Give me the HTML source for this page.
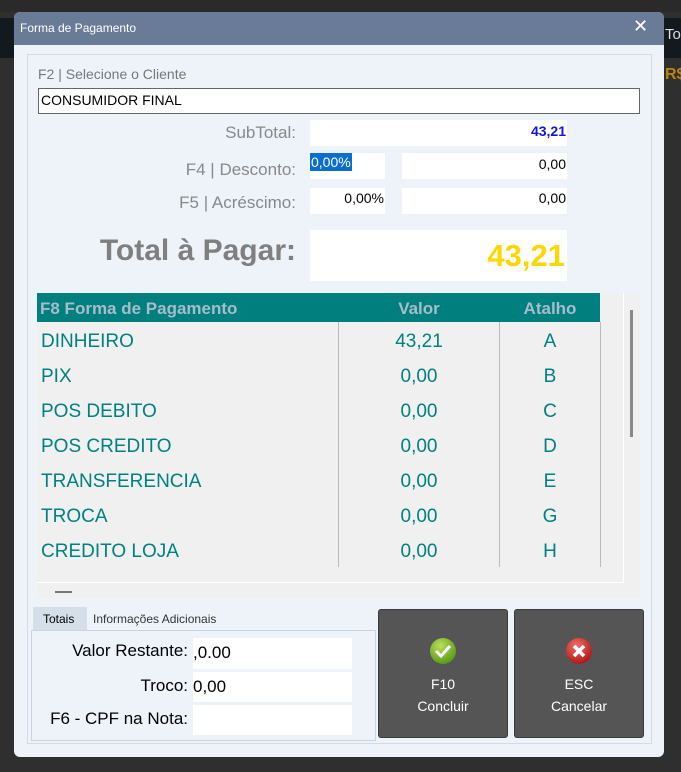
<!DOCTYPE html>
<html><head><meta charset="utf-8"><style>
*{margin:0;padding:0;box-sizing:border-box}
body{width:681px;height:772px;background:#2f2f2f;position:relative;overflow:hidden;font-family:"Liberation Sans",sans-serif}
.a{position:absolute}
.t{white-space:nowrap}
.row{position:absolute;left:37px;width:563px;height:35px;font-size:19px;color:#008080}
.row span{position:absolute;top:8px}
.inp{position:absolute;background:#fff}
</style></head><body>
<div class="a" style="left:0;top:0;width:681px;height:12px;background:#2a2a2a"></div>
<div class="a" style="left:0;top:18px;width:681px;height:40px;background:#121a20"></div>
<div class="a t" style="left:665px;top:26px;font-size:15px;color:#ddd">To</div>
<div class="a t" style="left:665px;top:66px;font-size:16px;color:#b8860b;font-weight:bold">R$</div>
<div class="a" style="left:14px;top:12px;width:650px;height:745px;background:#eef3fa;border-radius:6px;overflow:hidden">
 <div class="a" style="left:0;top:0;width:650px;height:33px;background:#6a7b98"></div>
 <div class="a t" style="left:6px;top:9px;font-size:12px;color:#fff">Forma de Pagamento</div>
 <div class="a t" style="left:619px;top:4px;font-size:18px;color:#fff">✕</div>
 <div class="a" style="left:13px;top:42px;width:625px;height:690px;border:1px solid #d0dbe6"></div>
</div>
<div class="a t" style="left:38px;top:66px;font-size:14px;color:#777">F2 | Selecione o Cliente</div>
<div class="a" style="left:38px;top:88px;width:602px;height:26px;background:#fff;border:1px solid #666"></div>
<div class="a t" style="left:41px;top:92px;font-size:14px;color:#000">CONSUMIDOR FINAL</div>
<div class="a t" style="left:150px;top:123px;width:146px;text-align:right;font-size:17px;color:#888">SubTotal:</div>
<div class="inp" style="left:310px;top:120px;width:257px;height:26px"></div>
<div class="a t" style="left:500px;top:123px;width:66px;text-align:right;font-size:14px;color:#1010e0;font-weight:bold">43,21</div>
<div class="a t" style="left:150px;top:160px;width:146px;text-align:right;font-size:17px;color:#888">F4 | Desconto:</div>
<div class="inp" style="left:310px;top:153px;width:75px;height:26px"></div>
<div class="a t" style="left:310px;top:153px;background:#0a6ed1;color:#fff;font-size:14px;padding:1px 1px">0,00%</div>
<div class="inp" style="left:402px;top:153px;width:165px;height:26px"></div>
<div class="a t" style="left:500px;top:156px;width:66px;text-align:right;font-size:14px">0,00</div>
<div class="a t" style="left:150px;top:193px;width:146px;text-align:right;font-size:17px;color:#888">F5 | Acréscimo:</div>
<div class="inp" style="left:310px;top:188px;width:75px;height:26px"></div>
<div class="a t" style="left:310px;top:190px;width:74px;text-align:right;font-size:14px">0,00%</div>
<div class="inp" style="left:402px;top:188px;width:165px;height:26px"></div>
<div class="a t" style="left:500px;top:190px;width:66px;text-align:right;font-size:14px">0,00</div>
<div class="a t" style="left:60px;top:234px;width:236px;text-align:right;font-size:30px;font-weight:bold;color:#7f7f7f">Total à Pagar:</div>
<div class="inp" style="left:310px;top:230px;width:257px;height:51px"></div>
<div class="a t" style="left:400px;top:238px;width:165px;text-align:right;font-size:31px;font-weight:bold;color:#ffd700">43,21</div>
<div class="a" style="left:37px;top:293px;width:603px;height:305px;background:#f0f0f0"></div>
<div class="a" style="left:37px;top:582px;width:586px;height:1px;background:#fff"></div>
<div class="a" style="left:623px;top:293px;width:1px;height:290px;background:#fff"></div>
<div class="a" style="left:630px;top:310px;width:3px;height:127px;background:#888"></div>
<div class="a" style="left:55px;top:591px;width:17px;height:2px;background:#777"></div>
<div class="a" style="left:37px;top:293px;width:563px;height:29px;background:#007f7f"></div>
<div class="a t" style="left:40px;top:299px;font-size:17px;font-weight:bold;color:#a8bccb">F8 Forma de Pagamento</div>
<div class="a t" style="left:338px;top:299px;width:162px;text-align:center;font-size:17px;font-weight:bold;color:#a8bccb">Valor</div>
<div class="a t" style="left:500px;top:299px;width:100px;text-align:center;font-size:17px;font-weight:bold;color:#a8bccb">Atalho</div>
<div class="a" style="left:338px;top:322px;width:1px;height:245px;background:#bbb"></div>
<div class="a" style="left:499px;top:322px;width:1px;height:245px;background:#bbb"></div>
<div class="a" style="left:600px;top:322px;width:1px;height:245px;background:#bbb"></div>
<div class="row" style="top:323px"><span style="left:4px">DINHEIRO</span><span style="left:301px;width:162px;text-align:center">43,21</span><span style="left:463px;width:100px;text-align:center">A</span></div>
<div class="row" style="top:358px"><span style="left:4px">PIX</span><span style="left:301px;width:162px;text-align:center">0,00</span><span style="left:463px;width:100px;text-align:center">B</span></div>
<div class="row" style="top:393px"><span style="left:4px">POS DEBITO</span><span style="left:301px;width:162px;text-align:center">0,00</span><span style="left:463px;width:100px;text-align:center">C</span></div>
<div class="row" style="top:428px"><span style="left:4px">POS CREDITO</span><span style="left:301px;width:162px;text-align:center">0,00</span><span style="left:463px;width:100px;text-align:center">D</span></div>
<div class="row" style="top:463px"><span style="left:4px">TRANSFERENCIA</span><span style="left:301px;width:162px;text-align:center">0,00</span><span style="left:463px;width:100px;text-align:center">E</span></div>
<div class="row" style="top:498px"><span style="left:4px">TROCA</span><span style="left:301px;width:162px;text-align:center">0,00</span><span style="left:463px;width:100px;text-align:center">G</span></div>
<div class="row" style="top:533px"><span style="left:4px">CREDITO LOJA</span><span style="left:301px;width:162px;text-align:center">0,00</span><span style="left:463px;width:100px;text-align:center">H</span></div>
<div class="a" style="left:33px;top:607px;width:54px;height:24px;background:#d5dfe9"></div>
<div class="a t" style="left:43px;top:612px;font-size:12px">Totais</div>
<div class="a t" style="left:93px;top:612px;font-size:12px;color:#333">Informações Adicionais</div>
<div class="a" style="left:31px;top:630px;width:345px;height:111px;border:1px solid #c8d4e0"></div>
<div class="inp" style="left:193px;top:638px;width:159px;height:31px"></div>
<div class="inp" style="left:193px;top:672px;width:159px;height:30px"></div>
<div class="inp" style="left:193px;top:705px;width:159px;height:30px"></div>
<div class="a t" style="left:30px;top:641px;width:158px;text-align:right;font-size:17px">Valor Restante:</div>
<div class="a t" style="left:193px;top:643px;font-size:17px">,0.00</div>
<div class="a t" style="left:30px;top:676px;width:158px;text-align:right;font-size:17px">Troco:</div>
<div class="a t" style="left:193px;top:677px;font-size:17px">0,00</div>
<div class="a t" style="left:30px;top:709px;width:158px;text-align:right;font-size:17px">F6 - CPF na Nota:</div>
<div class="a" style="left:378px;top:609px;width:130px;height:129px;background:#555;border:1px solid #3a3a3a;border-radius:3px"></div>
<div class="a" style="left:514px;top:609px;width:130px;height:129px;background:#555;border:1px solid #3a3a3a;border-radius:3px"></div>
<svg class="a" style="left:429px;top:637px" width="28" height="28" viewBox="0 0 28 28"><defs><radialGradient id="g" cx="40%" cy="30%" r="70%"><stop offset="0" stop-color="#b8e05a"/><stop offset="1" stop-color="#5a9a16"/></radialGradient><radialGradient id="r" cx="40%" cy="30%" r="70%"><stop offset="0" stop-color="#f0706a"/><stop offset="1" stop-color="#b01818"/></radialGradient></defs><circle cx="14" cy="14" r="13" fill="url(#g)"/><path d="M7 14l5 5 9-10" fill="none" stroke="#fff" stroke-width="3"/></svg>
<svg class="a" style="left:565px;top:637px" width="28" height="28" viewBox="0 0 28 28"><circle cx="14" cy="14" r="13" fill="url(#r)"/><path d="M9 9l10 10M19 9l-10 10" stroke="#fff" stroke-width="3.5"/></svg>
<div class="a t" style="left:378px;top:673px;width:130px;text-align:center;font-size:14px;color:#fff;line-height:22px">F10<br>Concluir</div>
<div class="a t" style="left:514px;top:673px;width:130px;text-align:center;font-size:14px;color:#fff;line-height:22px">ESC<br>Cancelar</div>
</body></html>
